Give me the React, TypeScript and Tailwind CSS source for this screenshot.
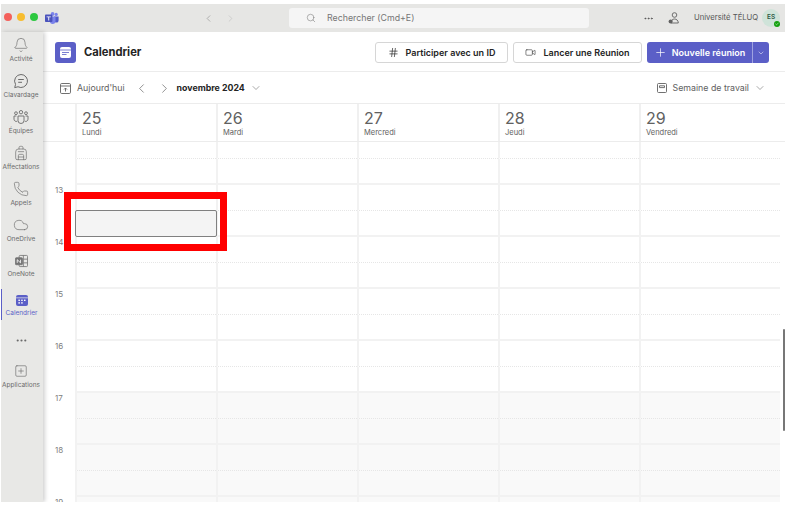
import { Bell, Backpack, Phone, Cloud, MoreHorizontal, ChevronLeft, ChevronRight, ChevronDown, Search, Hash, Video, Plus, SquarePlus, Check } from 'lucide-react';
import type { ComponentType } from 'react';

function ChatIcon({ size }: { size: number }) {
  return (
    <svg width={size} height={size} viewBox="0 0 16 16" fill="none" stroke="currentColor" strokeWidth="1">
      <path d="M8 1.5a6.5 6.5 0 1 1-3 12.27L1.7 14.6l.85-3.2A6.5 6.5 0 0 1 8 1.5z" />
      <path d="M5.2 6.5h5.6M5.2 9.3h3.8" />
    </svg>
  );
}

function TeamIcon({ size }: { size: number }) {
  return (
    <svg width={size} height={size} viewBox="0 0 16 16" fill="none" stroke="currentColor" strokeWidth="0.9">
      <circle cx="8" cy="3.2" r="1.7" />
      <circle cx="3" cy="4.2" r="1.4" />
      <circle cx="13" cy="4.2" r="1.4" />
      <path d="M5 7h6v4.5a3 3 0 0 1-6 0z" />
      <path d="M3.4 7H1v3.2a2.3 2.3 0 0 0 3.3 2M12.6 7H15v3.2a2.3 2.3 0 0 1-3.3 2" />
    </svg>
  );
}

const railItems: { label: string; icon: ComponentType<{ size: number; strokeWidth?: number }> }[] = [
  { label: 'Activité', icon: Bell },
  { label: 'Clavardage', icon: ChatIcon },
  { label: 'Équipes', icon: TeamIcon },
  { label: 'Affectations', icon: Backpack },
  { label: 'Appels', icon: Phone },
  { label: 'OneDrive', icon: Cloud },
];

const days = [
  { num: '25', name: 'Lundi' },
  { num: '26', name: 'Mardi' },
  { num: '27', name: 'Mercredi' },
  { num: '28', name: 'Jeudi' },
  { num: '29', name: 'Vendredi' },
];

// half-hour rows under the day header, the first one is cut by the scroll
const slots = [
  { hour: '', h: 'h-[17px]', dotted: true, off: false },
  { hour: '', h: 'h-[26px]', dotted: false, off: false },
  { hour: '13', h: 'h-[26px]', dotted: true, off: false },
  { hour: '', h: 'h-[26px]', dotted: false, off: false },
  { hour: '14', h: 'h-[26px]', dotted: true, off: false },
  { hour: '', h: 'h-[26px]', dotted: false, off: false },
  { hour: '15', h: 'h-[26px]', dotted: true, off: false },
  { hour: '', h: 'h-[26px]', dotted: false, off: false },
  { hour: '16', h: 'h-[26px]', dotted: true, off: false },
  { hour: '', h: 'h-[26px]', dotted: false, off: false },
  { hour: '17', h: 'h-[26px]', dotted: true, off: true },
  { hour: '', h: 'h-[26px]', dotted: false, off: true },
  { hour: '18', h: 'h-[26px]', dotted: true, off: true },
  { hour: '', h: 'h-[26px]', dotted: false, off: true },
  { hour: '19', h: 'h-[26px]', dotted: true, off: true },
];

function TeamsLogo() {
  return (
    <svg width="14" height="12" viewBox="0 0 14 12">
      <circle cx="11.2" cy="2.4" r="1.6" fill="#7b83eb" />
      <circle cx="7.6" cy="1.9" r="1.9" fill="#7b83eb" />
      <path d="M9 4.4h4.6v4a2.2 2.2 0 0 1-4.4 0z" fill="#5059c9" />
      <path d="M4.5 4.4h6v4.8a2.8 2.8 0 0 1-5.6 0z" fill="#7b83eb" />
      <rect x="0" y="2.6" width="7.4" height="7.4" rx="0.8" fill="#4b53bc" />
      <path d="M1.6 4.4h4.2v.9H4.2v3.2h-.9V5.3H1.6z" fill="#fff" />
    </svg>
  );
}

function CalendarFilled({ size }: { size: number }) {
  return (
    <svg width={size} height={size} viewBox="0 0 12 12">
      <path d="M0 3a2 2 0 0 1 2-2h8a2 2 0 0 1 2 2v.6H0z" fill="#5b5fc7" />
      <path d="M0 4.3h12V10a2 2 0 0 1-2 2H2a2 2 0 0 1-2-2z" fill="#5b5fc7" />
      <g fill="#fff">
        <rect x="2.4" y="5.6" width="1.5" height="1.4" />
        <rect x="5.2" y="5.6" width="1.5" height="1.4" />
        <rect x="8" y="5.6" width="1.5" height="1.4" />
        <rect x="2.4" y="8.2" width="1.5" height="1.4" />
        <rect x="5.2" y="8.2" width="1.5" height="1.4" />
      </g>
    </svg>
  );
}

function OneNoteIcon() {
  return (
    <svg width="13" height="14" viewBox="0 0 14 14" fill="none" stroke="#757575" strokeWidth="0.9">
      <rect x="4.5" y="1" width="9" height="12" rx="1" />
      <path d="M9 1v12M9 5h4.5M9 9h4.5" />
      <rect x="0.5" y="3.5" width="7.5" height="7.5" rx="0.8" fill="#757575" />
      <path d="M2.4 9V5.6L6 9V5.6" stroke="#fff" strokeWidth="0.9" />
    </svg>
  );
}

function Rail() {
  return (
    <div className="w-[42px] shrink-0 bg-[#e8e8e6] flex flex-col items-center pr-[2px] shadow-[2px_0_4px_rgba(0,0,0,0.18)] z-10 text-[#6b6b6b]">
      {railItems.map(item => {
        const Icon = item.icon;
        return (
          <div key={item.label} className="h-[36px] w-full flex flex-col items-center pt-[5px]">
            <Icon size={16} strokeWidth={1} />
            <span className="text-[6.5px] leading-[9px] mt-[2px] whitespace-nowrap">{item.label}</span>
          </div>
        );
      })}
      <div className="h-[36px] w-full flex flex-col items-center pt-[6px]">
        <OneNoteIcon />
        <span className="text-[6.5px] leading-[9px] mt-[2px]">OneNote</span>
      </div>
      <div className="h-[31px] mt-[5px] w-full flex flex-col items-center pt-[5px] border-l border-[#5b5fc7] text-[#5b5fc7]">
        <CalendarFilled size={12} />
        <span className="text-[6.5px] leading-[9px] mt-[3px]">Calendrier</span>
      </div>
      <div className="h-[40px] flex items-center">
        <MoreHorizontal size={13} strokeWidth={2} />
      </div>
      <div className="w-full flex flex-col items-center mt-[4px]">
        <SquarePlus size={14} strokeWidth={1.1} />
        <span className="text-[6.5px] leading-[9px] mt-[3px]">Applications</span>
      </div>
    </div>
  );
}

function TitleBar() {
  return (
    <div className="h-[28px] shrink-0 bg-[#e6e6e4] flex items-center">
      <div className="flex items-center gap-[5px] pl-[3px] w-[44px] pb-[2px]">
        <span className="w-[8px] h-[8px] rounded-full bg-[#f4605a]" />
        <span className="w-[8px] h-[8px] rounded-full bg-[#f7bd2f]" />
        <span className="w-[8px] h-[8px] rounded-full bg-[#2dc840]" />
      </div>
      <TeamsLogo />
      <div className="flex items-center gap-[11px] ml-[144px] w-[86px] text-[#8a8a8a]">
        <ChevronLeft size={11} strokeWidth={1.3} />
        <ChevronRight size={11} strokeWidth={1.3} className="text-[#bdbdbd]" />
      </div>
      <div className="w-[300px] h-[20px] bg-[#f5f5f5] rounded-[3px] flex items-center pl-[17px] text-[#757575]">
        <Search size={10} strokeWidth={1.3} />
        <span className="text-[8.8px] ml-[11px]">Rechercher (Cmd+E)</span>
      </div>
      <MoreHorizontal size={11} className="ml-[54px] text-[#555]" />
      <svg className="ml-[14px]" width="12" height="12" viewBox="0 0 12 12" fill="none" stroke="#616161" strokeWidth="0.9">
        <circle cx="6.5" cy="3" r="2.3" />
        <path d="M3 11c0-2.6 1.6-4 3.5-4s3.8 1.4 3.8 4z" />
        <circle cx="2.6" cy="9.4" r="2" fill="#616161" stroke="none" />
      </svg>
      <span className="ml-[14px] text-[7.7px] text-[#555] whitespace-nowrap">Université TÉLUQ</span>
      <div className="relative ml-[4px] w-[18px] h-[18px] rounded-full bg-[#cfe3d9] flex items-center justify-center text-[6.5px] font-semibold text-[#2e5c46]">
        ES
        <span className="absolute right-0 bottom-0 w-[6px] h-[6px] rounded-full bg-[#13a10e] flex items-center justify-center text-white">
          <Check size={4} strokeWidth={3} />
        </span>
      </div>
    </div>
  );
}

function Header() {
  return (
    <div className="h-[40px] shrink-0 flex items-center border-b border-[#ececec] pl-[12px] pt-[2px] text-[#242424]">
      <div className="w-[21px] h-[21px] rounded-[3px] bg-[#5b5fc7] flex items-center justify-center">
        <svg width="11" height="11" viewBox="0 0 11 11">
          <rect width="11" height="11" rx="2" fill="#fff" />
          <rect x="0" y="2.6" width="11" height="0.8" fill="#5b5fc7" />
          <rect x="2" y="5" width="7" height="0.8" fill="#5b5fc7" />
          <rect x="2" y="7.2" width="4.5" height="0.8" fill="#5b5fc7" />
        </svg>
      </div>
      <span className="ml-[8px] text-[11.2px] font-bold">Calendrier</span>
      <div className="ml-auto mr-[16px] flex gap-[5px] text-[9px] font-semibold">
        <div className="w-[133px] h-[21px] border border-[#d6d6d6] rounded-[3px] flex items-center justify-center gap-[7px]">
          <Hash size={11} strokeWidth={1.5} />
          Participer avec un ID
        </div>
        <div className="w-[129px] h-[21px] border border-[#d6d6d6] rounded-[3px] flex items-center justify-center gap-[7px]">
          <Video size={11} strokeWidth={1.2} />
          Lancer une Réunion
        </div>
        <div className="w-[122px] h-[21px] bg-[#5b5fc7] rounded-[3px] flex items-center text-white">
          <div className="flex-1 flex items-center justify-center gap-[5px] border-r border-[#9fa2e0] h-full">
            <Plus size={13} strokeWidth={1.3} />
            Nouvelle réunion
          </div>
          <div className="w-[16px] flex justify-center">
            <ChevronDown size={8} strokeWidth={1.5} />
          </div>
        </div>
      </div>
    </div>
  );
}

function Toolbar() {
  return (
    <div className="h-[32px] shrink-0 flex items-center border-b border-[#ececec] pl-[17px] pr-[19px] pt-[1px] text-[8.8px] text-[#616161]">
      <svg width="11" height="11" viewBox="0 0 11 11" fill="none" stroke="#616161" strokeWidth="0.9">
        <rect x="0.5" y="0.5" width="10" height="10" rx="1.2" />
        <path d="M0.5 3h10M5.5 8.5V5M4 6.5l1.5-1.5L7 6.5" />
      </svg>
      <span className="ml-[6px]">Aujourd'hui</span>
      <ChevronLeft size={15} strokeWidth={1.1} className="ml-[9px]" />
      <ChevronRight size={15} strokeWidth={1.1} className="ml-[8px]" />
      <span className="ml-[5px] font-bold text-[#242424]">novembre 2024</span>
      <ChevronDown size={12} strokeWidth={1.1} className="ml-[5px]" />
      <svg className="ml-auto" width="10" height="10" viewBox="0 0 10 10" fill="none" stroke="#616161" strokeWidth="0.9">
        <rect x="0.5" y="0.5" width="9" height="9" rx="1" />
        <path d="M2.5 2.8h5v1.8h-5z" />
      </svg>
      <span className="ml-[6px]">Semaine de travail</span>
      <ChevronDown size={12} strokeWidth={1.1} className="ml-[5px]" />
    </div>
  );
}

function DayHeader() {
  return (
    <div className="h-[38px] shrink-0 flex pl-[32px] border-b border-[#ececec]">
      {days.map(day => (
        <div key={day.num} className="w-[141px] border-l-2 border-[#f0f0f0] pl-[5px] pt-[4px] text-[#616161]">
          <div className="text-[16px] leading-[20px]">{day.num}</div>
          <div className="text-[7.5px] leading-[10px]">{day.name}</div>
        </div>
      ))}
    </div>
  );
}

function Grid() {
  return (
    <div className="flex-1 overflow-hidden">
      {slots.map((slot, i) => (
        <div key={i} className={`flex ${slot.h}`}>
          <div className="w-[32px] shrink-0 pl-[12px] pt-[1px] text-[8px] leading-[9px] text-[#808080]">{slot.hour}</div>
          {days.map(day => (
            <div
              key={day.num}
              className={`w-[141px] shrink-0 border-l-2 border-l-[#f2f2f2] ${slot.dotted ? 'border-b border-b-[#e6e6e6] [border-bottom-style:dotted]' : 'border-b-2 border-b-[#f2f2f2]'} ${slot.off ? 'bg-[#f9f9f9]' : 'bg-white'}`}
            />
          ))}
        </div>
      ))}
    </div>
  );
}

export default function App() {
  return (
    <div className="relative w-[792px] h-[507px] bg-white overflow-hidden pl-[1px] pt-[4px] font-['Inter','Liberation_Sans',sans-serif]">
      <div className="w-[784px] h-[498px] flex flex-col overflow-hidden">
        <TitleBar />
        <div className="flex-1 flex min-h-0">
          <Rail />
          <div className="flex-1 flex flex-col min-w-0">
            <Header />
            <Toolbar />
            <DayHeader />
            <Grid />
          </div>
        </div>
      </div>
      {/* highlighted slot with the red frame drawn over the grid */}
      <div className="absolute left-[75px] top-[210px] w-[142px] h-[27px] bg-[#f4f4f4] border border-[#808080] rounded-[2px]" />
      <div className="absolute left-[64px] top-[192px] w-[163px] h-[59px] border-[7px] border-[#ff0000]" />
      <div className="absolute left-[783px] top-[329px] w-[2px] h-[102px] bg-[#777] rounded-[1px]" />
    </div>
  );
}
